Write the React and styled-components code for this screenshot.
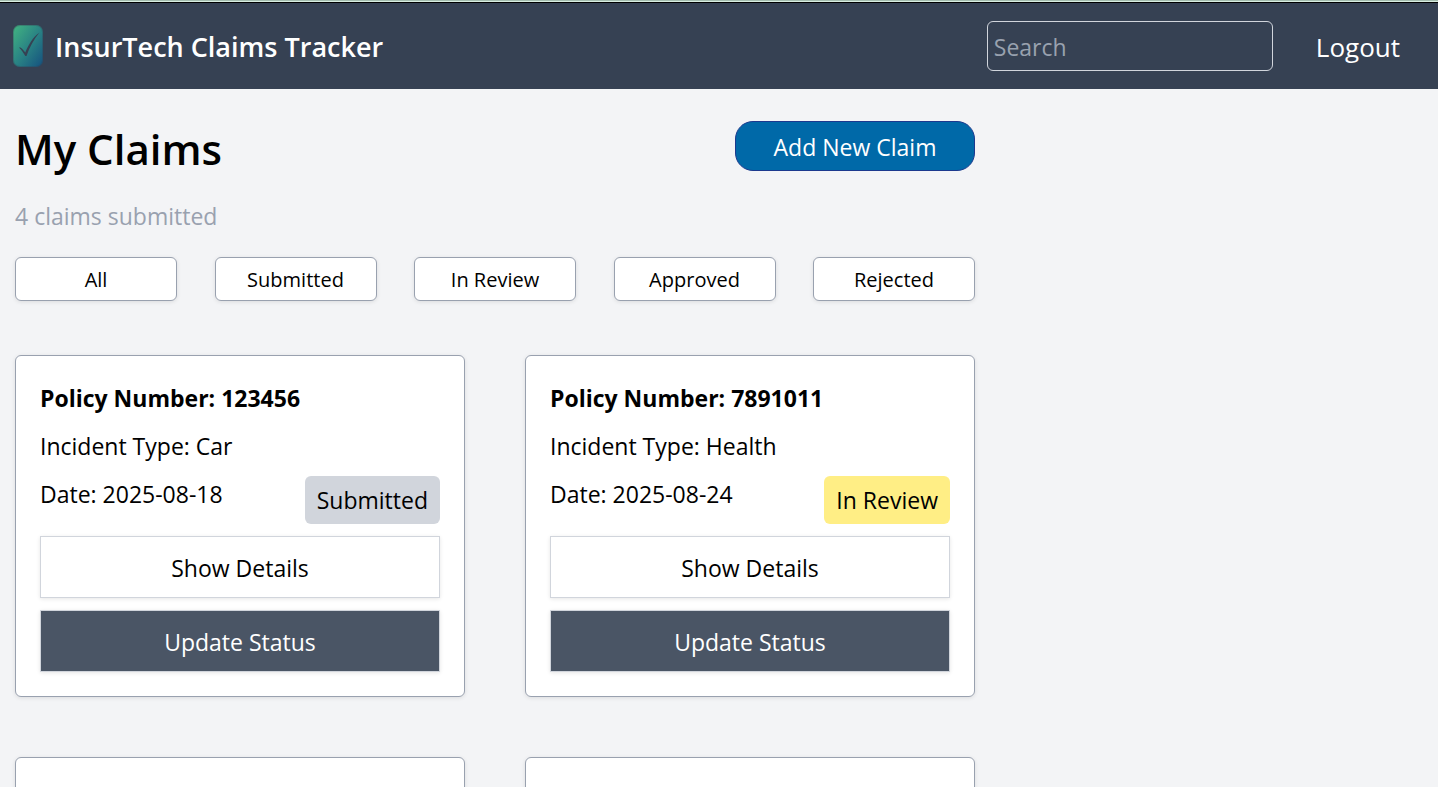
import React from "react";
import styled, { createGlobalStyle } from "styled-components";

const GlobalStyle = createGlobalStyle`
  *, *::before, *::after { box-sizing: border-box; }
  body {
    margin: 0;
    background: #f3f4f6;
    color: #000;
    font-family: "Open Sans", "Noto Sans", sans-serif;
    font-size: 23px;
    line-height: 36px;
  }
  h1, h2, p { margin: 0; }
  button, input { font: inherit; color: inherit; }
  button { cursor: pointer; }
`;

const Page = styled.div`
  height: 100vh;
  overflow: hidden;
`;

const Header = styled.header`
  display: flex;
  align-items: center;
  justify-content: space-between;
  height: 89px;
  padding: 0 38px 0 13px;
  border-top: 3px solid #000;
  border-image: linear-gradient(#a3bcae 0 1px, #d9eee2 1px 2px, #000 2px) 3 0 0 0;
  background: #364153;
  color: #fff;
`;

const Brand = styled.div`
  display: flex;
  align-items: center;
  gap: 12px;
`;

const BrandName = styled.span`
  padding-top: 2px;
  font-size: 27px;
  font-weight: 600;
`;

const Actions = styled.div`
  display: flex;
  align-items: center;
  gap: 43px;
`;

const Search = styled.input`
  width: 286px;
  height: 50px;
  padding: 2px 6px 0;
  border: 1px solid #d1d5dc;
  border-radius: 6px;
  background: transparent;
  &::placeholder { color: #99a1af; opacity: 1; }
`;

const Logout = styled.button`
  padding: 2px 0 0;
  border: 0;
  background: none;
  font-size: 26px;
`;

const Main = styled.main`
  max-width: 990px;
  padding: 32px 15px 0;
`;

const TitleRow = styled.div`
  display: flex;
  align-items: flex-start;
  justify-content: space-between;
`;

const Title = styled.h1`
  font-size: 42px;
  font-weight: 600;
  line-height: 56px;
`;

const AddButton = styled.button`
  width: 240px;
  height: 50px;
  padding: 2px 0 0;
  border: 1px solid #1c398e;
  border-radius: 18px;
  background: #0069a8;
  color: #fff;
`;

const Count = styled.p`
  margin-top: 21px;
  color: #99a1af;
`;

const Filters = styled.div`
  display: flex;
  justify-content: space-between;
  margin-top: 23px;
`;

const FilterButton = styled.button`
  width: 162px;
  height: 44px;
  padding: 2px 0 0;
  border: 1px solid #99a1af;
  border-radius: 6px;
  background: #fff;
  font-size: 20px;
  box-shadow: 0 1px 4px rgba(0, 0, 0, 0.1);
`;

const Cards = styled.div`
  display: grid;
  grid-template-columns: 1fr 1fr;
  gap: 60px;
  margin-top: 54px;
`;

const Card = styled.article`
  display: flex;
  flex-direction: column;
  gap: 12px;
  min-height: 342px;
  padding: 24px;
  border: 1px solid #99a1af;
  border-radius: 6px;
  background: #fff;
  box-shadow: 0 1px 4px rgba(0, 0, 0, 0.1);
`;

const Policy = styled.h2`
  font-size: 23px;
  font-weight: 700;
`;

const DateRow = styled.div`
  display: flex;
  align-items: flex-start;
  justify-content: space-between;
`;

const Badge = styled.span`
  padding: 6px 12px;
  border-radius: 6px;
  background: ${(p) => (p.$status === "In Review" ? "#ffee85" : "#d1d5dc")};
`;

const CardButton = styled.button`
  height: 62px;
  padding: 2px 0 0;
  border: 1px solid #d1d5dc;
  background: ${(p) => (p.$dark ? "#4a5565" : "#fff")};
  color: ${(p) => (p.$dark ? "#fff" : "#000")};
  box-shadow: 0 1px 4px rgba(0, 0, 0, 0.1);
`;

const Logo = () => (
  <svg width="30" height="42" viewBox="0 0 30 42" aria-hidden="true">
    <defs>
      <linearGradient id="logo" x1="0" y1="0" x2="1" y2="1">
        <stop offset="0" stopColor="#43b581" />
        <stop offset="0.5" stopColor="#2a8484" />
        <stop offset="1" stopColor="#15507f" />
      </linearGradient>
    </defs>
    <rect width="30" height="42" rx="7" fill="url(#logo)" />
    <rect x="0.5" y="0.5" width="29" height="41" rx="6.5" fill="none" stroke="#364153" strokeOpacity="0.35" />
    <path
      d="M6 22.5C7.5 22.3 8.5 23 9.3 24L12.3 27.5C15.5 19.5 20 12 26.3 7.7C21 14 16.5 22 13.5 31L12.3 31C10.8 28.5 8.7 25 6 22.5Z"
      fill="#364153"
    />
  </svg>
);

const filters = ["All", "Submitted", "In Review", "Approved", "Rejected"];

const claims = [
  { policy: "123456", type: "Car", date: "2025-08-18", status: "Submitted" },
  { policy: "7891011", type: "Health", date: "2025-08-24", status: "In Review" },
];

const ClaimCard = ({ claim }) => (
  <Card>
    <Policy>Policy Number: {claim.policy}</Policy>
    <p>Incident Type: {claim.type}</p>
    <DateRow>
      <p>Date: {claim.date}</p>
      <Badge $status={claim.status}>{claim.status}</Badge>
    </DateRow>
    <CardButton type="button">Show Details</CardButton>
    <CardButton type="button" $dark>Update Status</CardButton>
  </Card>
);

export default function App() {
  return (
    <Page>
      <GlobalStyle />
      <Header>
        <Brand>
          <Logo />
          <BrandName>InsurTech Claims Tracker</BrandName>
        </Brand>
        <Actions>
          <Search type="text" placeholder="Search" aria-label="Search" />
          <Logout type="button">Logout</Logout>
        </Actions>
      </Header>
      <Main>
        <TitleRow>
          <Title>My Claims</Title>
          <AddButton type="button">Add New Claim</AddButton>
        </TitleRow>
        <Count>4 claims submitted</Count>
        <Filters>
          {filters.map((name) => (
            <FilterButton key={name} type="button">{name}</FilterButton>
          ))}
        </Filters>
        <Cards>
          {claims.map((claim) => (
            <ClaimCard key={claim.policy} claim={claim} />
          ))}
          <Card />
          <Card />
        </Cards>
      </Main>
    </Page>
  );
}
